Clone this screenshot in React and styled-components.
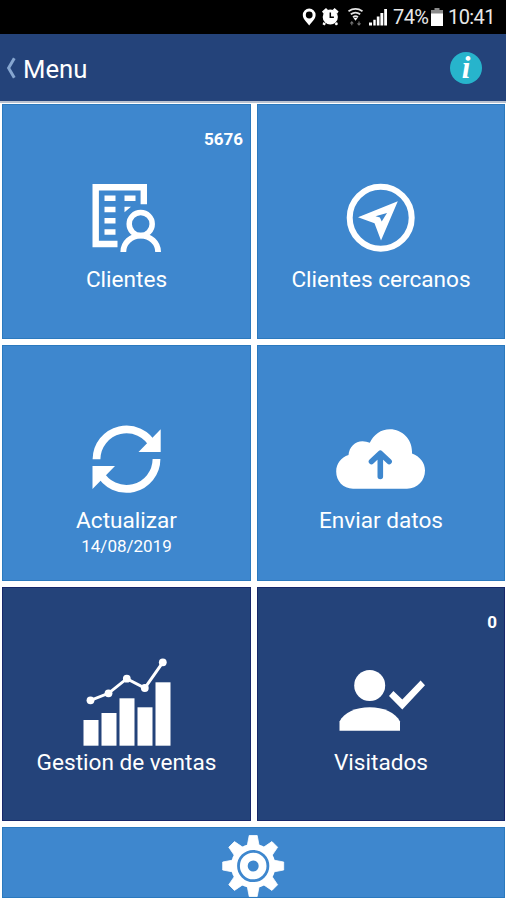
import React from "react";
import styled, { createGlobalStyle } from "styled-components";

const LIGHT = "#3e87ce";
const DARK = "#24437a";

function StatusBar() {
    return (
        <Status>
            <svg width="86" height="22" viewBox="0 0 86 22" fill="#fff">
                <path
                    fillRule="evenodd"
                    d="M7.2 2.6a6.4 6.4 0 0 0-6.4 6.4c0 4.1 4 7 6.4 10.6 2.4-3.6 6.4-6.5 6.4-10.6a6.4 6.4 0 0 0-6.4-6.4zM7.2 5.6a3.4 3.4 0 1 1 0 6.8 3.4 3.4 0 0 1 0-6.8z"
                />
                <path d="M20 5.500l4-3.500 2 2-4.500 3.800zM36.600 5.500l-4-3.500-2 2 4.500 3.800zM21.500 16l2.500 1.800-1.500 1.700-2-1.200zM35 16l-2.500 1.800 1.500 1.700 2-1.200z" />
                <circle cx="28.300" cy="11" r="7.600" />
                <path d="M28.300 6.600v4.600h3.600" stroke="#000" strokeWidth="1.500" fill="none" />
                <g fill="none" stroke="#e4e4e4" strokeWidth="1.800">
                    <path d="M46.500 5.200q7-4.600 14 0" />
                    <path d="M48.800 8.300q4.700-3.400 9.400 0" />
                    <path d="M51 11.200q2.500-2 5 0" />
                </g>
                <path d="M51.500 12h4l-2 2.800z" />
                <path d="M49.800 19.300v-3.500M48.300 17.500l1.500-1.700 1.500 1.700M57 15.500v3.500M55.500 17.300l1.500 1.700 1.500-1.700" stroke="#777" strokeWidth="1.100" fill="none" />
                <path d="M67 16.500h3v3h-3zM71.300 13.800h2.400v5.700h-2.400zM74.800 10.500h2.700v9h-2.700zM78.400 7h2.900v12.500h-2.900zM82.200 3h2.800v16.500h-2.800z" />
            </svg>
            <Percent>74%</Percent>
            <svg width="12" height="18" viewBox="0 0 12 18">
                <path d="M3.500 0h5v2H12v4H0V2h3.500z" fill="#8b8b8b" />
                <path d="M0 5.500h12V18H0z" fill="#fff" />
            </svg>
            <Clock>10:41</Clock>
        </Status>
    );
}

function ClientsIcon() {
    return (
        <Icon viewBox="0 0 90 90">
            <path d="M35.500 71H13.700V14.200h48.100v17.100" fill="none" stroke="#fff" strokeWidth="6.400" />
            <path d="M22.500 22.500h11V28h-11zM22.500 33.700h11v5.500h-11zM22.500 45h11v5.500h-11zM22.500 56.200h11v5.500h-11zM42.500 22.500h11V28h-11zM42.500 33.700H49l-6.500 5.500z" />
            <circle cx="58.700" cy="51" r="11.500" fill="none" stroke="#fff" strokeWidth="5.500" />
            <path d="M41.300 79a17.400 16.300 0 0 1 34.800 0" fill="none" stroke="#fff" strokeWidth="5.800" />
        </Icon>
    );
}

function CompassIcon() {
    return (
        <Icon viewBox="0 0 90 90">
            <circle cx="44.700" cy="44.700" r="31" fill="none" stroke="#fff" strokeWidth="6" />
            <path fillRule="evenodd" d="M61.800 28.300L22 44.300l16.500 6L45 67.500zM51 40l-5.300 8.500-1.800-4-4.400-1.200z" />
        </Icon>
    );
}

function RefreshIcon() {
    return (
        <Icon viewBox="0 0 90 90">
            <path d="M14.500 45.300A30 30 0 0 1 71.300 32M74.500 45A30 30 0 0 1 17.700 58.400" fill="none" stroke="#fff" strokeWidth="7.800" />
            <path d="M78.700 15.300V38H56.500zM10.500 52h22.500L10.500 75z" />
        </Icon>
    );
}

function CloudIcon() {
    return (
        <Icon viewBox="0 0 90 90">
            <path d="M17 74.700C7 74.700.2 67 .2 57.500.2 49.500 5 43.500 12.500 41 13 33 19 27.200 26.500 27.200q4 0 7.300 1.600C37.500 20.500 45 15.200 54 15.200c12 0 22 9.800 22 22.300v2C84 42.500 89 49 89 56.500c0 10-7.500 18.200-18 18.200z" />
            <path d="M44.300 62.500V39.500M35.500 47.500l8.800-8.300 8.800 8.300" fill="none" stroke={LIGHT} strokeWidth="5.600" strokeLinecap="round" strokeLinejoin="round" />
        </Icon>
    );
}

function SalesIcon() {
    const bars = [64, 57, 42.3, 51.3, 26.3];
    const dots = [
        [8.5, 44.3],
        [26.5, 37.3],
        [44.8, 22.7],
        [62.8, 32],
        [80.8, 6.3],
    ];
    return (
        <Icon viewBox="0 0 90 90">
            {bars.map((y, i) => (
                <rect key={i} x={1.5 + i * 18} y={y} width="15" height={89.7 - y} />
            ))}
            <polyline points={dots.join(" ")} fill="none" stroke="#fff" strokeWidth="3" />
            {dots.map(([x, y]) => (
                <circle key={x} cx={x} cy={y} r="3.9" />
            ))}
        </Icon>
    );
}

function VisitedIcon() {
    return (
        <Icon viewBox="0 0 90 90">
            <circle cx="33.700" cy="29.500" r="15.500" />
            <path d="M3.500 74.700v-9.200C8 56.500 20 51.300 33.700 51.300S59.400 56.500 64 65.500v9.200z" />
            <path d="M53 40l4.400-4.900 8.900 8.500 18.300-19.200 4.400 4.800-22.700 24.300z" />
        </Icon>
    );
}

function GearIcon() {
    const teeth = [0, 45, 90, 135, 180, 225, 270, 315];
    return (
        <svg width="64" height="64" viewBox="-31.200 -32 64 64" fill="#fff">
            <circle r="22.300" />
            {teeth.map((a) => (
                <path key={a} d="M-6-20l2-10.500h8l2 10.500z" transform={`rotate(${a})`} stroke="#fff" strokeWidth=".8" strokeLinejoin="round" />
            ))}
            <circle r="14.700" fill="none" stroke={LIGHT} strokeWidth="2.800" />
            <circle r="5.500" fill={LIGHT} />
        </svg>
    );
}

const tiles = [
    { label: "Clientes", icon: <ClientsIcon />, badge: "5676" },
    { label: "Clientes cercanos", icon: <CompassIcon /> },
    { label: "Actualizar", icon: <RefreshIcon />, note: "14/08/2019" },
    { label: "Enviar datos", icon: <CloudIcon /> },
    { label: "Gestion de ventas", icon: <SalesIcon />, dark: true },
    { label: "Visitados", icon: <VisitedIcon />, badge: "0", dark: true },
];

function App() {
    return (
        <Screen>
            <GlobalStyle />
            <StatusBar />
            <Header>
                <svg width="10" height="22" viewBox="0 0 10 22">
                    <path d="M8.300 1.200L2.600 11l5.700 9.800" fill="none" stroke="#86a6d0" strokeWidth="3" />
                </svg>
                <Title>Menu</Title>
                <Info>i</Info>
            </Header>
            <Grid>
                {tiles.map((tile) => (
                    <Tile key={tile.label} $dark={tile.dark}>
                        {tile.badge && <Badge>{tile.badge}</Badge>}
                        {tile.icon}
                        <Label>{tile.label}</Label>
                        {tile.note && <Note>{tile.note}</Note>}
                    </Tile>
                ))}
                <Settings>
                    <GearIcon />
                </Settings>
            </Grid>
        </Screen>
    );
}

export default App;

const GlobalStyle = createGlobalStyle`
    body {
        margin: 0;
        background: #fff;
    }
`;

const Screen = styled.div`
    display: flex;
    flex-direction: column;
    width: 506px;
    height: 900px;
    overflow: hidden;
    font-family: Roboto, sans-serif;
    color: #fff;
`;

const Status = styled.div`
    display: flex;
    align-items: center;
    box-sizing: border-box;
    height: 34px;
    padding-left: 302px;
    background: #000;
    color: #e8e8e8;
    font-size: 20px;
    line-height: 34px;
    white-space: nowrap;
`;

const Percent = styled.span`
    width: 38px;
    margin-left: 5px;
    letter-spacing: -0.6px;
`;

const Clock = styled.span`
    margin-left: 5px;
    letter-spacing: -0.6px;
`;

const Header = styled.div`
    display: flex;
    align-items: center;
    box-sizing: border-box;
    height: 69px;
    padding: 0 24px 0 6px;
    border-bottom: 2px solid #b9c1d0;
    background: ${DARK};
`;

const Title = styled.div`
    flex: 1;
    margin-left: 7px;
    padding-top: 2px;
    font-size: 25.7px;
    line-height: 30px;
`;

const Info = styled.div`
    width: 32px;
    height: 32px;
    border-radius: 50%;
    background: #27b4cc;
    font-family: "Liberation Serif", serif;
    font-size: 31px;
    font-style: italic;
    font-weight: 700;
    line-height: 31px;
    text-align: center;
`;

const Grid = styled.div`
    display: grid;
    grid-template-columns: 249px 248px;
    grid-template-rows: 235px 236px 234px 71px;
    gap: 6px;
    padding: 1px 1px 2px 2px;
`;

const Tile = styled.div`
    position: relative;
    display: flex;
    flex-direction: column;
    align-items: center;
    box-sizing: border-box;
    padding-top: 68px;
    border: 1px solid ${(props) => (props.$dark ? "#17286a" : "#2b79be")};
    background: ${(props) => (props.$dark ? DARK : LIGHT)};
`;

const Icon = styled.svg`
    flex: none;
    width: 90px;
    height: 90px;
    fill: #fff;
`;

const Label = styled.div`
    margin-top: 3px;
    font-size: 22.6px;
    line-height: 28px;
    white-space: nowrap;
`;

const Note = styled.div`
    font-size: 17px;
    line-height: 23px;
`;

const Badge = styled.div`
    position: absolute;
    top: 23px;
    right: 7px;
    font-size: 17px;
    font-weight: 700;
    line-height: 22px;
`;

const Settings = styled.div`
    grid-column: 1 / -1;
    display: flex;
    align-items: center;
    justify-content: center;
    box-sizing: border-box;
    padding-top: 6px;
    border: 1px solid #2b79be;
    background: ${LIGHT};
`;
